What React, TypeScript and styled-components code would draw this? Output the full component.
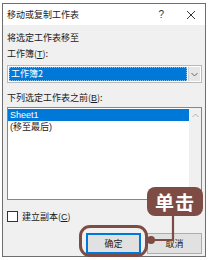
import styled, { createGlobalStyle } from 'styled-components';

const GlobalStyle = createGlobalStyle`
  html, body {
    margin: 0;
    padding: 0;
    background: #ffffff;
  }
  body {
    font-family: "Noto Sans CJK SC", "Liberation Sans", sans-serif;
    font-size: 9px;
    color: #1a1a1a;
  }
`;

const accent = '#7d4d45';

export default function App() {
  return (
    <>
      <GlobalStyle />
      <Page>
        <Dialog>
          <TitleBar>
            <Title>移动或复制工作表</Title>
            <TitleButtons>
              <HelpMark>?</HelpMark>
              <svg width="10" height="10" viewBox="0 0 10 10">
                <path d="M1 1 L9 9 M9 1 L1 9" stroke="#333" strokeWidth="1" />
              </svg>
            </TitleButtons>
          </TitleBar>
          <Body>
            <Label>将选定工作表移至</Label>
            <Label $gap={4}>
              工作簿(<U>T</U>):
            </Label>
            <Select>
              <SelectValue>工作簿2</SelectValue>
              <DropButton>
                <svg width="7" height="5" viewBox="0 0 7 5">
                  <path d="M0.5 1 L3.5 4 L6.5 1" stroke="#666" fill="none" strokeWidth="1" />
                </svg>
              </DropButton>
            </Select>
            <Label $gap={9}>
              下列选定工作表之前(<U>B</U>):
            </Label>
            <ListBox>
              <ListItems>
                <ListItem $selected>Sheet1</ListItem>
                <ListItem>(移至最后)</ListItem>
              </ListItems>
              <ScrollTrack>
                <svg width="7" height="5" viewBox="0 0 7 5">
                  <path d="M0.5 4 L3.5 1 L6.5 4" stroke="#b0b0b0" fill="none" strokeWidth="1" />
                </svg>
              </ScrollTrack>
            </ListBox>
            <CheckRow>
              <CheckBox />
              <span>
                建立副本(<U>C</U>)
              </span>
            </CheckRow>
            <ButtonRow>
              <Button $primary>确定</Button>
              <Button>取消</Button>
            </ButtonRow>
          </Body>
        </Dialog>

        <Highlight />
        <Badge>单击</Badge>
        <Connector width="210" height="260" viewBox="0 0 210 260">
          <path d="M173 214 L173 240 L152 240" stroke={accent} strokeWidth="2.2" fill="none" />
          <circle cx="151" cy="240" r="4" fill={accent} />
        </Connector>
      </Page>
    </>
  );
}

const Page = styled.div`
  position: relative;
  width: 210px;
  height: 260px;
  padding: 3px 0 0 2px;
  box-sizing: border-box;
`;

const Dialog = styled.div`
  width: 204px;
  height: 254px;
  box-sizing: border-box;
  border: 1px solid #6e6e6e;
  background: #f0f0f0;
  display: flex;
  flex-direction: column;
`;

const TitleBar = styled.div`
  height: 21px;
  background: #ffffff;
  display: flex;
  align-items: center;
  justify-content: space-between;
  padding: 0 9px 0 4px;
`;

const Title = styled.div`
  font-size: 9px;
  color: #222;
`;

const TitleButtons = styled.div`
  display: flex;
  align-items: center;
  gap: 22px;
`;

const HelpMark = styled.span`
  font-family: "Liberation Sans", sans-serif;
  font-size: 10px;
  color: #333;
`;

const Body = styled.div`
  flex: 1;
  display: flex;
  flex-direction: column;
  padding: 7px 3px 0 4px;
`;

const Label = styled.div<{ $gap?: number }>`
  height: 12px;
  line-height: 12px;
  margin-top: ${(p) => p.$gap ?? 0}px;
  white-space: nowrap;
`;

const U = styled.span`
  text-decoration: underline;
  font-family: "Liberation Sans", sans-serif;
`;

const Select = styled.div`
  margin-top: 5px;
  height: 18px;
  box-sizing: border-box;
  border: 1px solid #b9b9b9;
  background: #ffffff;
  display: flex;
  padding: 1px;
  gap: 1px;
`;

const SelectValue = styled.div`
  flex: 1;
  background: #0078d7;
  color: #ffffff;
  outline: 1px dotted #7fbcec;
  outline-offset: -1px;
  line-height: 14px;
  padding-left: 2px;
  font-size: 9px;
`;

const DropButton = styled.div`
  width: 11px;
  background: #e6e6e6;
  border-left: 1px solid #cfcfcf;
  display: flex;
  align-items: center;
  justify-content: center;
`;

const ListBox = styled.div`
  margin-top: 3px;
  height: 93px;
  box-sizing: border-box;
  border: 1px solid #828790;
  background: #ffffff;
  display: flex;
`;

const ListItems = styled.div`
  flex: 1;
  padding-top: 1px;
  display: flex;
  flex-direction: column;
`;

const ListItem = styled.div<{ $selected?: boolean }>`
  height: 12px;
  line-height: 12px;
  padding-left: 2px;
  background: ${(p) => (p.$selected ? '#0078d7' : 'transparent')};
  color: ${(p) => (p.$selected ? '#ffffff' : '#1a1a1a')};
  font-family: "Liberation Sans", "Noto Sans CJK SC", sans-serif;
`;

const ScrollTrack = styled.div`
  width: 12px;
  background: #f0f0f0;
  display: flex;
  justify-content: center;
  padding-top: 5px;
  box-sizing: border-box;
`;

const CheckRow = styled.div`
  margin-top: 10px;
  display: flex;
  align-items: center;
  gap: 4px;
  height: 12px;
`;

const CheckBox = styled.div`
  width: 9px;
  height: 9px;
  border: 1px solid #333;
  background: #ffffff;
`;

const ButtonRow = styled.div`
  margin-top: 11px;
  display: flex;
  justify-content: flex-end;
  gap: 6px;
`;

const Button = styled.div<{ $primary?: boolean }>`
  width: 55px;
  height: 21px;
  box-sizing: border-box;
  background: #e1e1e1;
  border: ${(p) => (p.$primary ? '2px solid #0078d7' : '1px solid #adadad')};
  display: flex;
  align-items: center;
  justify-content: center;
  font-size: 9px;
`;

const Highlight = styled.div`
  position: absolute;
  left: 79px;
  top: 225px;
  width: 69px;
  height: 32px;
  box-sizing: border-box;
  border: 3px solid ${accent};
  border-radius: 11px;
`;

const Badge = styled.div`
  position: absolute;
  left: 147px;
  top: 187px;
  width: 56px;
  height: 29px;
  border-radius: 8px;
  background: ${accent};
  color: #ffffff;
  font-size: 19px;
  font-weight: 700;
  line-height: 29px;
  text-align: center;
  letter-spacing: 1px;
`;

const Connector = styled.svg`
  position: absolute;
  left: 0;
  top: 0;
  pointer-events: none;
`;
